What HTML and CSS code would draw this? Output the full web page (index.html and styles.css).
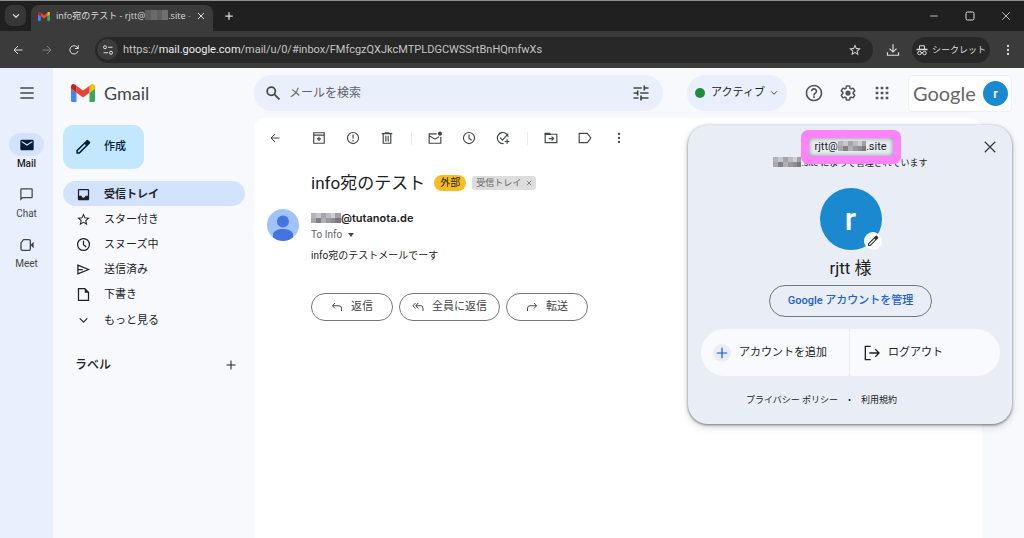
FILE: index.html
```html
<!DOCTYPE html>
<html lang="ja">
<head>
<meta charset="utf-8">
<meta name="viewport" content="width=device-width, initial-scale=1">
<title>info宛のテスト - Gmail</title>
<link rel="stylesheet" href="styles.css">
</head>
<body>
<svg class="defs" aria-hidden="true">
  <symbol id="gmail" viewBox="0 0 24 18">
    <path fill="#4285f4" d="M1.6 18H5.500V8.700L0 4.600V16.400Q0 18 1.600 18z"/>
    <path fill="#34a853" d="M18.500 18h3.900Q24 18 24 16.400V4.600L18.500 8.700z"/>
    <path fill="#fbbc04" d="M18.500 1.700v7L24 4.600V2.500C24 .4 21.600-.7 19.900.6z"/>
    <path fill="#ea4335" d="M5.500 8.700v-7L12 6.500l6.500-4.800v7L12 13.600z"/>
    <path fill="#c5221f" d="M0 2.500v2.100l5.500 4.100v-7L4.100.6C2.400-.7 0 .4 0 2.500z"/>
  </symbol>
  <symbol id="chevron" viewBox="0 0 24 24"><path class="line" d="M5 8l7 7 7-7"/></symbol>
  <symbol id="close" viewBox="0 0 24 24"><path class="line" d="M3 3l18 18M21 3L3 21"/></symbol>
  <symbol id="plus" viewBox="0 0 24 24"><path class="line" d="M12 3v18M3 12h18"/></symbol>
  <symbol id="back" viewBox="0 0 24 24"><path class="line" d="M21 12H4M12 4l-8 8 8 8"/></symbol>
  <symbol id="forward" viewBox="0 0 24 24"><path class="line" d="M3 12h17M12 4l8 8-8 8"/></symbol>
  <symbol id="reload" viewBox="0 0 24 24"><path class="line" d="M20 14a8.300 8.300 0 1 1-2-8l2.500 2.500M20.500 2.500v6.500H14"/></symbol>
  <symbol id="site" viewBox="0 0 24 24"><path class="line" d="M12 6.500h9M3 17.500h9"/><circle class="line" cx="6" cy="6.500" r="3"/><circle class="line" cx="18" cy="17.500" r="3"/></symbol>
  <symbol id="star" viewBox="0 0 24 24"><path d="M22 9.240l-7.190-.62L12 2 9.190 8.630 2 9.240l5.460 4.730L5.820 21 12 17.270 18.180 21l-1.630-7.030L22 9.240zM12 15.400l-3.760 2.270 1-4.280-3.320-2.880 4.380-.38L12 6.100l1.710 4.040 4.380.38-3.320 2.880 1 4.280L12 15.400z"/></symbol>
  <symbol id="download" viewBox="0 0 24 24"><path class="line" d="M12 2v13M6 9.500l6 6 6-6M2.500 16v5h19v-5"/></symbol>
  <symbol id="incognito" viewBox="0 0 24 24"><path class="line" d="M7 10V3.500h10V10"/><path d="M1 9.500h22v3H1z"/><circle class="line" cx="7" cy="18" r="3.500"/><circle class="line" cx="17" cy="18" r="3.500"/><path class="line" d="M10 17.500h4"/></symbol>
  <symbol id="dots" viewBox="0 0 24 24"><circle cx="12" cy="4" r="2.300"/><circle cx="12" cy="12" r="2.300"/><circle cx="12" cy="20" r="2.300"/></symbol>
  <symbol id="minimize" viewBox="0 0 24 24"><path class="line" d="M3 12h18"/></symbol>
  <symbol id="maximize" viewBox="0 0 24 24"><rect class="line" x="4" y="4" width="16" height="16" rx="3"/></symbol>
  <symbol id="menu" viewBox="0 0 24 24"><path class="line" d="M2 4.500h20M2 12h20M2 19.500h20"/></symbol>
  <symbol id="search" viewBox="0 0 24 24"><circle class="line" cx="9" cy="9" r="7"/><path class="line" d="M14 14l9 9"/></symbol>
  <symbol id="tune" viewBox="0 0 24 24"><path d="M3 17v2h6v-2H3zM3 5v2h10V5H3zm10 16v-2h8v-2h-8v-2h-2v6h2zM7 9v2H3v2h4v2h2V9H7zm14 4v-2H11v2h10zm-6-4h2V7h4V5h-4V3h-2v6z"/></symbol>
  <symbol id="help" viewBox="0 0 24 24"><path d="M11 18h2v-2h-2v2zm1-16C6.480 2 2 6.480 2 12s4.480 10 10 10 10-4.480 10-10S17.520 2 12 2zm0 18c-4.410 0-8-3.590-8-8s3.590-8 8-8 8 3.590 8 8-3.590 8-8 8zm0-14c-2.210 0-4 1.790-4 4h2c0-1.100.9-2 2-2s2 .9 2 2c0 2-3 1.750-3 5h2c0-2.250 3-2.500 3-5 0-2.210-1.790-4-4-4z"/></symbol>
  <symbol id="gear" viewBox="0 0 24 24"><path d="M13.850 22.250h-3.700c-.74 0-1.360-.54-1.450-1.270l-.27-1.890c-.27-.14-.53-.29-.79-.46l-1.800.72c-.7.26-1.470-.03-1.810-.65L2.200 15.530c-.35-.66-.2-1.440.36-1.880l1.530-1.190c-.01-.15-.02-.3-.02-.46 0-.15.010-.31.020-.46l-1.520-1.190c-.59-.45-.74-1.260-.37-1.880l1.850-3.190c.34-.62 1.110-.9 1.790-.63l1.810.73c.26-.17.52-.32.78-.46l.27-1.910c.09-.7.71-1.250 1.440-1.250h3.700c.74 0 1.360.54 1.450 1.270l.27 1.890c.27.14.53.29.79.46l1.800-.72c.71-.26 1.480.03 1.820.65l1.840 3.180c.36.66.2 1.440-.36 1.880l-1.520 1.190c.01.15.02.3.02.46s-.01.31-.02.46l1.520 1.190c.56.45.72 1.230.37 1.860l-1.860 3.220c-.34.62-1.110.9-1.800.63l-1.800-.72c-.26.17-.52.32-.78.46l-.27 1.910c-.1.680-.72 1.220-1.460 1.220zm-3.230-2h2.760l.37-2.550.53-.22c.44-.18.88-.44 1.340-.78l.45-.34 2.380.96 1.380-2.400-2.030-1.580.07-.56c.03-.26.06-.51.06-.78s-.03-.53-.06-.78l-.07-.56 2.030-1.580-1.390-2.400-2.390.96-.45-.35c-.42-.32-.87-.58-1.330-.77l-.52-.22-.37-2.550h-2.760l-.37 2.550-.53.21c-.44.19-.88.440-1.340.79l-.45.33-2.380-.95-1.390 2.390 2.030 1.580-.07.56a7 7 0 0 0-.06.790c0 .26.02.53.06.78l.07.56-2.030 1.580 1.380 2.400 2.390-.96.45.35c.43.33.86.58 1.330.77l.53.22.38 2.550z"/><circle cx="12" cy="12" r="3.500"/></symbol>
  <symbol id="grid" viewBox="0 0 24 24"><path d="M2.500 2.500h4v4h-4zM10 2.500h4v4h-4zM17.500 2.500h4v4h-4zM2.500 10h4v4h-4zM10 10h4v4h-4zM17.500 10h4v4h-4zM2.500 17.500h4v4h-4zM10 17.500h4v4h-4zM17.500 17.500h4v4h-4z"/></symbol>
  <symbol id="mail" viewBox="0 0 24 24"><path d="M20 4H4c-1.100 0-2 .9-2 2v12c0 1.100.9 2 2 2h16c1.100 0 2-.9 2-2V6c0-1.100-.9-2-2-2zm0 4l-8 5-8-5V6l8 5 8-5v2z"/></symbol>
  <symbol id="chat" viewBox="0 0 24 24"><path d="M20 2H4c-1.100 0-2 .9-2 2v18l4-4h14c1.100 0 2-.9 2-2V4c0-1.100-.9-2-2-2zm0 14H5.200L4 17.200V4h16v12z"/></symbol>
  <symbol id="meet" viewBox="0 0 24 24"><path class="line" d="M7 4h8q2 0 2 2v12q0 2-2 2H5q-2 0-2-2V8.500z"/><path d="M17 12l5-5v10z"/></symbol>
  <symbol id="pencil" viewBox="0 0 24 24"><path d="M2 22v-5L17.300 1.700q1.200-1.200 2.400 0l2.600 2.600q1.200 1.200 0 2.400L7 22zM4.200 19.800h1.700L16.400 9.300l-1.700-1.700L4.200 18.100z"/></symbol>
  <symbol id="inbox" viewBox="0 0 24 24"><path d="M19 3H5c-1.100 0-2 .9-2 2v14c0 1.100.9 2 2 2h14c1.100 0 2-.9 2-2V5c0-1.100-.9-2-2-2zm0 11h-4c0 1.660-1.350 3-3 3s-3-1.340-3-3H5V5h14v9z"/></symbol>
  <symbol id="clock" viewBox="0 0 24 24"><circle class="line" cx="12" cy="12" r="9.500"/><path class="line" d="M12 6v6.500l4.500 3.500"/></symbol>
  <symbol id="send" viewBox="0 0 24 24"><path class="line" d="M3 5l17 7-17 7zM3 12h8"/></symbol>
  <symbol id="file" viewBox="0 0 24 24"><path class="line" d="M4 2.500h10l6 6v13H4z"/><path d="M14 2v7h6z"/></symbol>
  <symbol id="archive" viewBox="0 0 24 24"><path class="line" d="M3 6V3h18v18H3V7h18"/><path class="line" d="M12 10v7M8.500 13.500h7"/></symbol>
  <symbol id="spam" viewBox="0 0 24 24"><circle class="line" cx="12" cy="12" r="9.500"/><path class="line" d="M12 6v7M12 15.500v2.500"/></symbol>
  <symbol id="trash" viewBox="0 0 24 24"><path class="line" d="M3 4.500h18M8 3h8M5.500 5v16h13V5M10 8v10M14 8v10"/></symbol>
  <symbol id="unread" viewBox="0 0 24 24"><path class="line" d="M15 5H2v16h20V10M2 8l10 6 7-4"/><circle cx="20.500" cy="4.500" r="3.500"/></symbol>
  <symbol id="task" viewBox="0 0 24 24"><path class="line" d="M21 10a9.500 9.500 0 1 0-8 11.500M7 11.500l4 4L21 4.500M19 14v8M15 18h8"/></symbol>
  <symbol id="move" viewBox="0 0 24 24"><path class="line" d="M2 5.500h20V20H2z"/><path d="M1 3h9l2 2v2H1z"/><path class="line" d="M8 13h9M13 9.500l3.500 3.500-3.500 3.500"/></symbol>
  <symbol id="label" viewBox="0 0 24 24"><path class="line" d="M2 4h14l6 8-6 8H2z"/></symbol>
  <symbol id="reply" viewBox="0 0 24 24"><path class="line" d="M8 4L3 9.500 8 15M3 9.500h13q5 0 5 5V20"/></symbol>
  <symbol id="replyall" viewBox="0 0 24 24"><path class="line" d="M7 4L2 9.500 7 15M12.500 4l-5 5.500 5 5.500M8 9.500h10q4 0 4 5V20"/></symbol>
  <symbol id="share" viewBox="0 0 24 24"><path class="line" d="M16 4l5 5.500-5 5.500M21 9.500H8q-5 0-5 5V20"/></symbol>
  <symbol id="logout" viewBox="0 0 24 24"><path class="line" d="M10 2H2v20h8M8 12h14M17 6.500l5.500 5.500-5.500 5.500"/></symbol>
</svg>

<div class="browser">
  <div class="tabs">
    <button class="tab-search" aria-label="タブを検索"><svg class="i10 thick"><use href="#chevron"/></svg></button>
    <div class="tab">
      <svg class="favicon"><use href="#gmail"/></svg>
      <span class="tab-title">info宛のテスト - rjtt@<i class="mosaic dark"></i>.site <span class="fade">-</span></span>
      <button aria-label="タブを閉じる"><svg class="i8 thick"><use href="#close"/></svg></button>
    </div>
    <button class="new-tab" aria-label="新しいタブ"><svg class="i10 thick"><use href="#plus"/></svg></button>
    <div class="window-controls">
      <button aria-label="最小化"><svg class="i10"><use href="#minimize"/></svg></button>
      <button aria-label="最大化"><svg class="i12"><use href="#maximize"/></svg></button>
      <button aria-label="閉じる"><svg class="i10"><use href="#close"/></svg></button>
    </div>
  </div>
  <div class="toolbar">
    <button aria-label="戻る"><svg class="i12"><use href="#back"/></svg></button>
    <button class="dim" aria-label="進む"><svg class="i12"><use href="#forward"/></svg></button>
    <button class="reload" aria-label="再読み込み"><svg class="i12"><use href="#reload"/></svg></button>
    <div class="address">
      <button class="site" aria-label="サイト情報"><svg class="i12"><use href="#site"/></svg></button>
      <span class="url">https://<b>mail.google.com</b>/mail/u/0/#inbox/FMfcgzQXJkcMTPLDGCWSSrtBnHQmfwXs</span>
      <button aria-label="ブックマーク"><svg class="i14"><use href="#star"/></svg></button>
    </div>
    <button class="dl" aria-label="ダウンロード"><svg class="i14"><use href="#download"/></svg></button>
    <button class="incognito"><svg class="i12"><use href="#incognito"/></svg>シークレット</button>
    <button class="more" aria-label="メニュー"><svg class="i12"><use href="#dots"/></svg></button>
  </div>
</div>

<div class="app">
  <nav class="rail">
    <button class="menu" aria-label="メインメニュー"><svg class="i16"><use href="#menu"/></svg></button>
    <a class="current" href="#"><span class="pill"><svg class="i16"><use href="#mail"/></svg></span>Mail</a>
    <a href="#"><span class="pill"><svg class="i15"><use href="#chat"/></svg></span>Chat</a>
    <a href="#"><span class="pill"><svg class="i16"><use href="#meet"/></svg></span>Meet</a>
  </nav>

  <div class="page">
    <header>
      <a class="brand" href="#"><svg><use href="#gmail"/></svg>Gmail</a>
      <form class="search">
        <button type="button" aria-label="検索"><svg class="i14 thick"><use href="#search"/></svg></button>
        <input type="text" placeholder="メールを検索" aria-label="メールを検索">
        <button type="button" aria-label="検索オプション"><svg class="i20"><use href="#tune"/></svg></button>
      </form>
      <button class="status"><i></i>アクティブ<svg class="i10"><use href="#chevron"/></svg></button>
      <div class="tools">
        <button aria-label="サポート"><svg class="i20"><use href="#help"/></svg></button>
        <button aria-label="設定"><svg class="i18"><use href="#gear"/></svg></button>
        <button aria-label="Google アプリ"><svg class="i16"><use href="#grid"/></svg></button>
      </div>
      <a class="org" href="#"><span class="google">Google</span><span class="me">r</span></a>
    </header>

    <div class="body">
      <aside>
        <button class="compose"><svg class="i16"><use href="#pencil"/></svg>作成</button>
        <ul>
          <li><a class="selected" href="#"><svg class="i15"><use href="#inbox"/></svg>受信トレイ</a></li>
          <li><a href="#"><svg class="i15"><use href="#star"/></svg>スター付き</a></li>
          <li><a href="#"><svg class="i15"><use href="#clock"/></svg>スヌーズ中</a></li>
          <li><a href="#"><svg class="i15"><use href="#send"/></svg>送信済み</a></li>
          <li><a href="#"><svg class="i15"><use href="#file"/></svg>下書き</a></li>
          <li><a href="#"><svg class="i15"><use href="#chevron"/></svg>もっと見る</a></li>
        </ul>
        <div class="labels"><h2>ラベル</h2><button aria-label="新しいラベル"><svg class="i12"><use href="#plus"/></svg></button></div>
      </aside>

      <main>
        <div class="actions">
          <button class="return" aria-label="受信トレイに戻る"><svg class="i12"><use href="#back"/></svg></button>
          <button aria-label="アーカイブ"><svg class="i14"><use href="#archive"/></svg></button>
          <button aria-label="迷惑メールを報告"><svg class="i14"><use href="#spam"/></svg></button>
          <button aria-label="削除"><svg class="i14"><use href="#trash"/></svg></button>
          <span class="divider"></span>
          <button aria-label="未読にする"><svg class="i14"><use href="#unread"/></svg></button>
          <button aria-label="スヌーズ"><svg class="i14"><use href="#clock"/></svg></button>
          <button aria-label="ToDo リストに追加"><svg class="i14"><use href="#task"/></svg></button>
          <span class="divider"></span>
          <button aria-label="移動"><svg class="i14"><use href="#move"/></svg></button>
          <button aria-label="ラベル"><svg class="i14"><use href="#label"/></svg></button>
          <button aria-label="その他"><svg class="i12"><use href="#dots"/></svg></button>
        </div>
        <div class="subject">
          <h1>info宛のテスト</h1>
          <span class="external">外部</span>
          <span class="tag">受信トレイ<button aria-label="ラベルを削除"><svg class="i6 thick"><use href="#close"/></svg></button></span>
        </div>
        <article>
          <svg class="person" viewBox="0 0 32 32"><circle cx="16" cy="16" r="16" fill="#a1c3fa"/><circle cx="16" cy="12.500" r="6" fill="#4374e0"/><path fill="#4374e0" d="M6 28.500v-3C6 18 26 18 26 25.500v3a16 16 0 0 1-20 0z"/></svg>
          <div class="message">
            <div class="sender"><i class="mosaic"></i>@tutanota.de</div>
            <div class="to">To Info <i></i></div>
            <p>info宛のテストメールでーす</p>
            <div class="replies">
              <button><svg class="i12"><use href="#reply"/></svg>返信</button>
              <button class="all"><svg class="i12"><use href="#replyall"/></svg>全員に返信</button>
              <button><svg class="i12"><use href="#share"/></svg>転送</button>
            </div>
          </div>
        </article>
      </main>
    </div>

    <section class="account" aria-label="アカウント">
      <button class="dismiss" aria-label="閉じる"><svg class="i14"><use href="#close"/></svg></button>
      <div class="email">rjtt@<i class="mosaic"></i>.site</div>
      <div class="managed"><i class="mosaic"></i>.site によって管理されています</div>
      <div class="portrait">r<button aria-label="写真を変更"><svg class="i12"><use href="#pencil"/></svg></button></div>
      <div class="name">rjtt 様</div>
      <a class="manage" href="#">Google アカウントを管理</a>
      <div class="choices">
        <a href="#"><span class="add"><svg class="i14"><use href="#plus"/></svg></span>アカウントを追加</a>
        <a href="#"><svg class="i16"><use href="#logout"/></svg>ログアウト</a>
      </div>
      <footer><a href="#">プライバシー ポリシー</a><span>・</span><a href="#">利用規約</a></footer>
    </section>
  </div>
</div>
</body>
</html>
```

FILE: styles.css
```css
* { box-sizing: border-box; }

body {
  margin: 0;
  min-height: 100vh;
  display: flex;
  flex-direction: column;
  background: #f7f9fd;
  color: #202124;
  font: 11px/16px Roboto, "Noto Sans CJK JP", sans-serif;
}

button, input {
  font: inherit;
  color: inherit;
  background: none;
  border: 0;
  padding: 0;
}

button, .status, .brand, .org, .choices a {
  display: flex;
  align-items: center;
}

button { justify-content: center; }
a { color: inherit; text-decoration: none; }
ul { list-style: none; margin: 0; padding: 0; }
h1, h2, p { margin: 0; font-weight: 400; }

svg { flex: none; fill: currentColor; stroke-width: 2; }
.line { fill: none; stroke: currentColor; }
.thick { stroke-width: 3; }
.defs { position: absolute; width: 0; height: 0; }
.i6 { width: 6px; height: 6px; }
.i8 { width: 8px; height: 8px; }
.i10 { width: 10px; height: 10px; }
.i12 { width: 12px; height: 12px; }
.i14 { width: 14px; height: 14px; }
.i15 { width: 15px; height: 15px; }
.i16 { width: 16px; height: 16px; }
.i18 { width: 18px; height: 18px; }
.i20 { width: 20px; height: 20px; }

.mosaic {
  display: inline-block;
  width: 28px;
  height: 10px;
  vertical-align: -1px;
  background:
    linear-gradient(90deg, #b4b4b8 5px, #c8c8cc 5px 10px, #a4a4aa 10px 15px, #bcbcc0 15px 20px, #d0d0d4 20px 24px, #a0a0a6 24px) 0 0 / 100% 5px no-repeat,
    linear-gradient(90deg, #a8a8ac 5px, #808086 5px 10px, #b0b0b4 10px 15px, #98989e 15px 20px, #8c8c92 20px 24px, #78787e 24px) 0 5px / 100% 5px no-repeat;
}

.mosaic.dark {
  width: 23px;
  background: linear-gradient(90deg, #5c5c5c 6px, #6a6a6a 6px 12px, #606060 12px 17px, #707070 17px);
}

/* Browser frame */
.browser {
  color: #dcdcdc;
  background: #3b3b3b;
  font-family: "Open Sans", "Noto Sans CJK JP", sans-serif;
}

.tabs {
  display: flex;
  height: 31px;
  padding-left: 5px;
  border-top: 1px solid #8c908e;
  background: #202020;
}

.tab-search {
  width: 21px;
  height: 21px;
  margin: 4px 5px 0 0;
  border-radius: 7px;
  background: #373737;
}

.tab {
  display: flex;
  align-items: center;
  width: 182px;
  margin-top: 4px;
  padding: 0 8px 4px 7px;
  border-radius: 8px 8px 0 0;
  background: #3b3b3b;
}

.favicon { width: 12px; height: 9px; margin-right: 6px; }
.tab-title { flex: 1; font-size: 9px; white-space: nowrap; }
.fade { color: #888; }
.new-tab { width: 32px; padding-bottom: 1px; }
.window-controls { display: flex; margin-left: auto; }
.window-controls button { width: 36px; }

.toolbar {
  display: flex;
  align-items: center;
  height: 37px;
  padding: 0 7px 0 3px;
}

.toolbar > button { width: 29px; }
.toolbar .dim { color: #808080; }
.toolbar .reload { width: 26px; }

.address {
  display: flex;
  flex: 1;
  align-items: center;
  min-width: 0;
  height: 26px;
  margin-left: 8px;
  padding: 0 11px 0 2px;
  border-radius: 13px;
  background: #282828;
}

.site { width: 21px; height: 21px; margin-right: 5px; border-radius: 50%; background: #3b3b3b; }
.url { flex: 1; overflow: hidden; color: #c4c4c4; font-family: Roboto, sans-serif; white-space: nowrap; }
.url b { color: #ececec; font-weight: 400; }
.toolbar .dl { width: 39px; }

.toolbar .incognito {
  width: 78px;
  height: 26px;
  gap: 4px;
  border-radius: 13px;
  background: #282828;
  font-size: 9px;
  white-space: nowrap;
}

.toolbar .more { width: 27px; margin-left: 4px; margin-right: -4px; }

/* Application */
.app { display: flex; flex: 1; }

.rail {
  display: flex;
  flex-direction: column;
  align-items: center;
  width: 53px;
  background: #e9f0fd;
  color: #444746;
}

.rail .menu { height: 50px; margin-bottom: 15px; }
.rail a {
  display: flex;
  flex-direction: column;
  align-items: center;
  height: 50px;
  font-size: 10px;
  line-height: 16px;
}
.pill {
  display: flex;
  align-items: center;
  justify-content: center;
  width: 35px;
  height: 23px;
  border-radius: 12px;
}
.rail .current { color: #1f1f1f; font-weight: 500; }
.current .pill { background: #d3e3fd; color: #001d35; }

.page {
  position: relative;
  display: flex;
  flex: 1;
  flex-direction: column;
  min-width: 0;
}

header {
  display: flex;
  align-items: center;
  height: 50px;
  padding-right: 12px;
}

.brand {
  width: 201px;
  padding-left: 18px;
  gap: 9px;
  color: #444746;
  font: 18px/24px Lato, sans-serif;
}
.brand svg { width: 24px; height: 18px; }

.search {
  display: flex;
  flex: 1;
  align-items: center;
  max-width: 640px;
  height: 36px;
  padding: 0 12px;
  border-radius: 18px;
  background: #e9f0fb;
  color: #444746;
}
.search input { flex: 1; min-width: 0; margin-left: 9px; font-size: 12px; outline: 0; }
.search input::placeholder { color: #5f6368; opacity: 1; }

.status {
  width: 100px;
  height: 36px;
  margin-left: 24px;
  border-radius: 18px;
  background: #e9f0fb;
  white-space: nowrap;
}
.status i { width: 10px; height: 10px; margin-right: 6px; border-radius: 50%; background: #1e8e3e; }
.status svg { margin-left: 4px; }

.tools { display: flex; margin: 0 9px 0 10px; color: #54575a; }
.tools button { width: 34px; }

.org {
  justify-content: space-between;
  width: 104px;
  height: 37px;
  padding: 0 3px 0 4px;
  border: 1px solid #edf0f5;
  border-radius: 4px;
  background: #fff;
}
.google { color: #666; font: 20px/24px Lato, sans-serif; }
.me {
  width: 25px;
  border-radius: 50%;
  background: #1a89d0;
  color: #fff;
  font-size: 13px;
  font-weight: 500;
  line-height: 25px;
  text-align: center;
}

.body { display: flex; flex: 1; }

aside { width: 201px; padding: 7px 9px 0 10px; }

.compose {
  justify-content: flex-start;
  width: 81px;
  height: 44px;
  gap: 13px;
  margin-bottom: 12px;
  padding-left: 12px;
  border-radius: 11px;
  background: #c2e7ff;
  color: #001d35;
  font-weight: 500;
}

aside li a {
  display: flex;
  align-items: center;
  height: 25px;
  padding: 2px 0 0 13px;
  gap: 13px;
  border-radius: 13px;
}
aside .selected { background: #d3e3fd; font-weight: 700; }
aside li:last-child a { height: 27px; }
aside li:last-child svg { padding: 1px; }

.labels {
  display: flex;
  justify-content: space-between;
  margin-top: 24px;
  padding: 0 8px 0 12px;
}
.labels h2 { font-size: 12px; font-weight: 500; line-height: 16px; }

main {
  flex: 1;
  min-width: 0;
  margin-right: 42px;
  border-radius: 11px 11px 0 0;
  background: #fff;
}

.actions { display: flex; align-items: center; height: 40px; padding-left: 4px; color: #444746; }
.actions button { width: 34px; }
.actions .return { margin-right: 10px; }
.divider { width: 1px; height: 13px; margin: 0 6px 0 7px; background: #e8eaed; }

.subject { display: flex; align-items: center; height: 50px; padding-left: 57px; }
.subject h1 { margin-right: 9px; font-size: 17px; line-height: 24px; white-space: nowrap; }
.external {
  padding: 0 6px;
  margin-right: 6px;
  border-radius: 8px;
  background: #f6bc26;
  font-size: 10px;
}
.tag {
  display: flex;
  gap: 5px;
  padding: 0 4px;
  border-radius: 3px;
  background: #ddd;
  color: #666;
  font-size: 9px;
  line-height: 14px;
}

article { display: flex; padding-left: 13px; }
.person { width: 32px; height: 32px; margin: 1px 12px 0 0; }
.sender { height: 20px; font: 600 11px/20px Inter, sans-serif; }
.sender .mosaic { width: 30px; }
.to { color: #5f6368; font-size: 10px; line-height: 14px; }
.to i {
  display: inline-block;
  margin-left: 3px;
  border: 3px solid transparent;
  border-top: 4px solid #444746;
  border-bottom: 0;
  vertical-align: 1px;
}
.message p { margin: 6px 0 29px; font-size: 10px; }

.replies { display: flex; gap: 6px; }
.replies button {
  width: 82px;
  height: 28px;
  gap: 8px;
  border: 1px solid #747775;
  border-radius: 14px;
  color: #444746;
  white-space: nowrap;
}
.replies .all { width: 101px; }

/* Account menu, floating below the header */
.account {
  position: absolute;
  top: 57px;
  right: 12px;
  display: flex;
  flex-direction: column;
  align-items: center;
  width: 324px;
  padding: 13px 12px 15px 13px;
  border-radius: 20px;
  background: #e9eef6;
  box-shadow: 0 1px 3px rgba(0, 0, 0, .5), 0 3px 8px rgba(0, 0, 0, .15);
}
.dismiss { position: absolute; top: 15px; right: 15px; color: #333; }

.email {
  position: relative;
  width: 84px;
  height: 18px;
  background: #e9eef6;
  box-shadow: inset 0 0 5px #888;
  line-height: 18px;
  text-align: center;
  white-space: nowrap;
  z-index: 1;
}
.email::after {
  content: "";
  position: absolute;
  inset: -8px;
  border: 8px solid #fd83fb;
  border-radius: 7px;
}
.managed { height: 14px; font-size: 9px; line-height: 14px; }
.email .mosaic { width: 28px; }

.portrait {
  position: relative;
  width: 62px;
  margin: 18px 0 7px;
  border-radius: 50%;
  background: #1a89d0;
  color: #fff;
  font-size: 32px;
  font-weight: 500;
  line-height: 62px;
  text-align: center;
}
.portrait button {
  position: absolute;
  right: 0;
  bottom: 0;
  width: 18px;
  height: 18px;
  border-radius: 50%;
  background: #fff;
  color: #333;
}

.name { margin-bottom: 6px; font-size: 17px; line-height: 22px; }

.manage {
  padding: 0 18px;
  border: 1px solid #747775;
  border-radius: 16px;
  color: #2160c9;
  font-weight: 500;
  line-height: 30px;
  white-space: nowrap;
}

.choices { display: flex; align-self: stretch; gap: 1px; margin: 12px 0 16px; }
.choices a { flex: 1; height: 47px; gap: 8px; background: #f8fafd; white-space: nowrap; }
.choices a:first-child { padding-left: 12px; border-radius: 24px 2px 2px 24px; }
.choices a:last-child { padding-left: 14px; border-radius: 2px 24px 24px 2px; }
.add {
  display: flex;
  align-items: center;
  justify-content: center;
  width: 18px;
  height: 18px;
  border-radius: 50%;
  background: #e9eef6;
  color: #0b57d0;
}

.account footer { display: flex; padding-right: 58px; font-size: 9px; line-height: 17px; white-space: nowrap; }
.account footer span { padding: 0 7px; }
```
